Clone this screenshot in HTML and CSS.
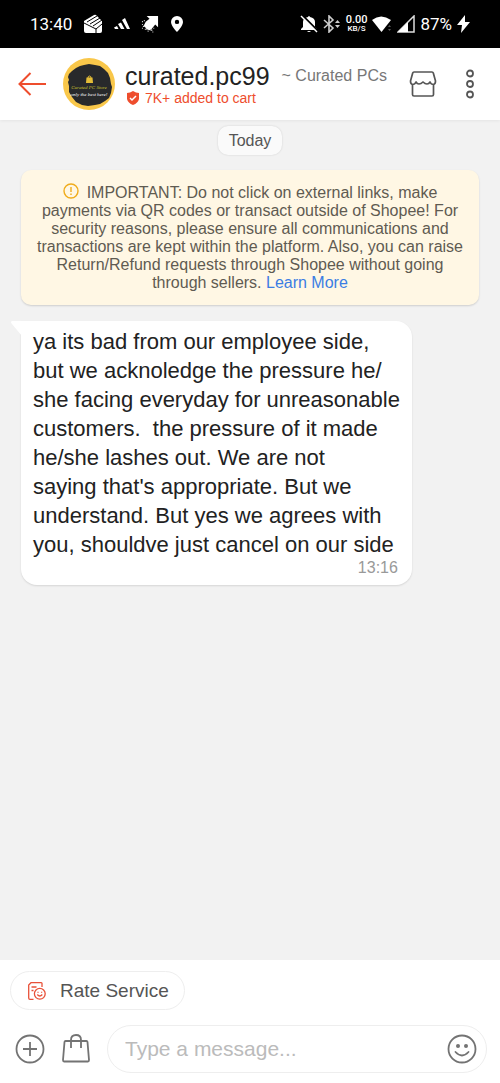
FILE: index.html
```html
<!DOCTYPE html>
<html lang="en">
<head>
<meta charset="utf-8">
<meta name="viewport" content="width=device-width, initial-scale=1">
<title>curated.pc99</title>
<link rel="stylesheet" href="styles.css">
</head>
<body>
<div class="status">
  <div class="status-left">
    <span class="clock">13:40</span>
    <svg width="20" height="20" viewBox="0 0 20 20"><path d="M1 7L11 1q1-.5 2 0l5 5 1 1v10q0 2-2 2H3q-2 0-2-2z" fill="#fff"/><path d="M1 9l12 6 6-5M13 15v4M4 8l10-6M7 10l10-6M10 12l9-6" stroke="#000" fill="none"/></svg>
    <svg width="16" height="12" viewBox="0 0 16 12"><path d="M0 9.500l3-1.500 1.500 3H1zM4 6l3-1.500 3.500 6.500H7zM8 2l3-2 5 11h-3z" fill="#fff"/></svg>
    <svg width="18" height="18" viewBox="0 0 19 19"><path d="M6 1h12v12l-3-3-4 5-2 1-3-1-3-4 2-4 4-3z" fill="#fff"/><path d="M1 7h1M3 6h1M1 10h1M2 12h2M1 14h1M4 15h2M7 17h1M10 16h2M13 14h1M12 18h1" stroke="#ddd" stroke-width="1.200"/></svg>
    <svg width="14" height="18" viewBox="0 0 14 18"><path fill-rule="evenodd" d="M7 1a6 6 0 0 0-6 6c0 4 6 10 6 10s6-6 6-10a6 6 0 0 0-6-6zm0 3.700a2.200 2.200 0 1 1 0 4.400 2.200 2.200 0 0 1 0-4.400z" fill="#fff"/></svg>
  </div>
  <div class="status-right">
    <svg width="18" height="18" viewBox="0 0 18 18"><path d="M3 7q0-4 5-5 1-2 2 0 5 1 5 5v5l2 2v1H1v-1l2-2zM7 16h4q-2 2-4 0z" fill="#fff"/><path d="M3 1l14 14" stroke="#000" stroke-width="2"/><path d="M1 1l16 16" stroke="#fff" stroke-width="1.500"/></svg>
    <svg width="18" height="18" viewBox="0 0 18 18"><path d="M1 5l9 8-4 4V1l4 4-9 8" fill="none" stroke="#ccc" stroke-width="1.600"/><path d="M12 8l2.500-3L17 8zM12 10h5l-2.500 3z" fill="#ccc"/></svg>
    <span class="speed"><span>0.00</span><span>KB/S</span></span>
    <svg width="20" height="18" viewBox="0 0 20 18"><path d="M0 5q9-7 19 0L9.500 17z" fill="#fff"/><path d="M16 12l1.500-2 1.500 2zM16 14h3l-1.500 2z" fill="#555"/></svg>
    <svg width="18" height="18" viewBox="0 0 18 18"><path d="M17 1v16H1z" fill="none" stroke="#ddd" stroke-width="1.500"/><path d="M1 17L11 7v10z" fill="#fff"/></svg>
    <span class="battery">87%</span>
    <svg width="13" height="18" viewBox="0 0 13 18"><path d="M8 0L0 10h5l-1 8 9-11H8z" fill="#fff"/></svg>
  </div>
</div>

<header class="header">
  <button class="icon-button" aria-label="Back"><svg width="28" height="26" viewBox="0 0 28 26" fill="none" stroke="#ee4d2d" stroke-width="2"><path d="M12.500 2L1.500 13l11 11M1.500 13H28"/></svg></button>
  <svg class="avatar" width="52" height="52" viewBox="0 0 52 52">
    <circle cx="26" cy="26" r="26" fill="#f9c74a"/>
    <path d="M6 16l2-2 1-1 4-3 4-2 4-1 5-1 6 1 5 1 4 3 4 4 2 5 1 6 1 3-1 6-2 5-4 3-5 3-5 1-7 1-6-1-6-3-4-5-3-5v-6l-1-4 1-2-1-3z" fill="#28292b"/>
    <path d="M23.500 19.500h6l.5 5.500h-7z" fill="#e4bd37"/><path d="M25 20q0-2 1.500-2t1.500 2" fill="none" stroke="#e4bd37"/>
    <text x="26" y="31" class="avatar-name" text-anchor="middle">Curated PC Store</text>
    <text x="26" y="38" class="avatar-tag" text-anchor="middle">only the best here!</text>
  </svg>
  <div class="seller">
    <div class="seller-line"><h1>curated.pc99</h1><span class="alias">~ Curated PCs</span></div>
    <div class="cart-line"><svg width="14" height="14" viewBox="0 0 14 14"><path d="M7 0q3 2 6 2v6q-1 4-6 6-5-2-6-6V2q3 0 6-2z" fill="#ee4d2d"/><path d="M4 7l2 2 4-4" stroke="#fff" stroke-width="1.500" fill="none"/></svg><span>7K+ added to cart</span></div>
  </div>
  <div class="header-actions">
    <button class="icon-button" aria-label="Shop"><svg width="28" height="28" viewBox="0 0 28 28" fill="none" stroke="#555" stroke-width="1.700" stroke-linejoin="round"><path d="M5 2h18q1 0 1.300 1L26.500 11q0 3-2 3.500-2.500 0-3.500-2.500-1 2-3 2t-4-2q-2 2-4 2t-3-2q-1 2.500-3.500 2.500-2-.5-2-3.500L3.700 3q.3-1 1.300-1zM3.500 14.500v10q0 1.500 1.500 1.500h18q1.500 0 1.500-1.500v-10"/></svg></button>
    <button class="icon-button" aria-label="More options"><svg width="8" height="30" viewBox="0 0 8 30" fill="none" stroke="#555" stroke-width="1.800"><circle cx="4" cy="4.500" r="3"/><circle cx="4" cy="15" r="3"/><circle cx="4" cy="25.500" r="3"/></svg></button>
  </div>
</header>

<main class="chat">
  <div class="day">Today</div>
  <p class="notice"><svg width="16" height="16" viewBox="0 0 16 16" fill="none" stroke="#f0ac1c" stroke-width="1.400"><circle cx="8" cy="8" r="7"/><path d="M8 4v5M8 10.500V12"/></svg>IMPORTANT: Do not click on external links, make<br>payments via QR codes or transact outside of Shopee! For<br>security reasons, please ensure all communications and<br>transactions are kept within the platform. Also, you can raise<br>Return/Refund requests through Shopee without going<br>through sellers. <a href="#learn">Learn More</a></p>
  <article class="bubble">
    <svg class="tail" width="11" height="18" viewBox="0 0 11 18"><path d="M1 0h10v15L1 3q-2-2 0-3z" fill="#fff"/></svg>
    <p>ya its bad from our employee side,<br>but we acknoledge the pressure he/<br>she facing everyday for unreasonable<br>customers.&nbsp; the pressure of it made<br>he/she lashes out. We are not<br>saying that's appropriate. But we<br>understand. But yes we agrees with<br>you, shouldve just cancel on our side</p>
    <time>13:16</time>
  </article>
</main>

<footer class="composer">
  <button class="rate"><svg width="18" height="18" viewBox="0 0 18 18" fill="none" stroke="#e85139" stroke-width="1.300"><path d="M14 5V1.500q0-.8-.8-.8H3L.7 3v13q0 1.300 1.300 1.300h3.500M3.500 5h5M3.500 8.500h2"/><circle cx="11.800" cy="11.800" r="5.400"/><path d="M9.300 12.500q2.500 3 5 0M10 9.800v1M13.600 9.800v1"/></svg>Rate Service</button>
  <div class="composer-row">
    <button class="icon-button" aria-label="Add"><svg width="30" height="30" viewBox="0 0 30 30" fill="none" stroke="#737373" stroke-width="1.800"><circle cx="15" cy="15" r="13.500"/><path d="M8 15h14M15 8v14"/></svg></button>
    <button class="icon-button" aria-label="Products"><svg width="28" height="30" viewBox="0 0 28 30" fill="none" stroke="#737373" stroke-width="1.800" stroke-linejoin="round"><path d="M3.500 7h21q.8 0 1 1L27 26q0 1.500-1 1.500H2q-1 0-1-1.500L2.500 8q.2-1 1-1zM9 14V6q0-5 5-5t5 5v8"/></svg></button>
    <div class="field">
      <input type="text" aria-label="Message" placeholder="Type a message...">
      <button class="icon-button" aria-label="Emoji"><svg width="30" height="30" viewBox="0 0 30 30" fill="none" stroke="#737373" stroke-width="1.800"><circle cx="15" cy="15" r="13.500"/><path d="M8.500 18q6.500 7 13 0" stroke-linecap="round"/><g fill="#737373" stroke="none"><circle cx="11" cy="12" r="2"/><circle cx="19" cy="12" r="2"/></g></svg></button>
    </div>
  </div>
</footer>
</body>
</html>
```
FILE: styles.css
```css
* { box-sizing: border-box; }
body {
  margin: 0;
  min-height: 100vh;
  display: flex;
  flex-direction: column;
  background: #f2f2f2;
  color: #222;
  font-family: "Liberation Sans", Arial, sans-serif;
}
svg { display: block; flex: none; }
h1, p { margin: 0; font-weight: 400; }
button, input { font: inherit; color: inherit; background: none; border: 0; padding: 0; }
.icon-button { display: flex; flex: none; }

.status {
  display: flex;
  justify-content: space-between;
  align-items: center;
  height: 48px;
  padding: 0 30px;
  background: #000;
  color: #fff;
  font-family: Roboto, sans-serif;
  font-size: 17px;
}
.status-left { display: flex; align-items: center; gap: 11px; }
.status-right { display: flex; align-items: center; gap: 5px; }
.speed {
  display: flex;
  flex-direction: column;
  align-items: center;
  font-size: 11px;
  line-height: 10px;
  font-weight: 500;
}
.speed span + span { font-size: 8px; line-height: 8px; }

.header {
  display: flex;
  align-items: center;
  height: 72px;
  padding: 0 26px 0 18px;
  background: #fff;
  box-shadow: 0 1px 3px rgba(0, 0, 0, .06);
}
.avatar { margin: 0 10px 0 17px; }
.avatar-name { fill: #c9c22f; font: italic 5px "Liberation Serif", serif; }
.avatar-tag { fill: #fff; font: italic 5px "Liberation Serif", serif; }
.seller { flex: 1; white-space: nowrap; }
.seller-line { display: flex; align-items: center; gap: 12px; }
.seller h1 { font-size: 25px; line-height: 28px; }
.alias { font-size: 16px; color: #777; }
.cart-line {
  display: flex;
  align-items: center;
  gap: 5px;
  padding-left: 1px;
  font-size: 14px;
  line-height: 16px;
  color: #ee4d2d;
}
.header-actions { display: flex; align-items: center; gap: 29px; }

.chat { flex: 1; padding: 6px 21px 20px; }
.day {
  width: fit-content;
  margin: 0 auto 15px;
  padding: 0 11px;
  border-radius: 10px;
  background: #fafafa;
  box-shadow: 0 0 2px rgba(0, 0, 0, .15);
  font-size: 16px;
  line-height: 29px;
  color: #555;
}
.notice {
  padding: 13px 0;
  border-radius: 10px;
  background: #fff7e4;
  box-shadow: 0 1px 2px rgba(0, 0, 0, .15);
  font-size: 16px;
  line-height: 18px;
  text-align: center;
  white-space: nowrap;
  color: #5f5b52;
}
.notice svg { display: inline-block; margin-right: 8px; vertical-align: -1px; }
.notice a { color: #3b7de3; text-decoration: none; }
.bubble {
  position: relative;
  width: fit-content;
  margin-top: 16px;
  padding: 6px 12px 9px;
  border-radius: 0 16px 16px 16px;
  background: #fff;
  box-shadow: 0 1px 2px rgba(0, 0, 0, .12);
}
.bubble p { font-size: 22px; line-height: 29px; white-space: nowrap; }
.bubble time {
  display: block;
  padding-right: 2px;
  text-align: right;
  font-size: 16px;
  line-height: 17px;
  color: #999;
}
.tail { position: absolute; top: 0; left: -10px; }

.composer { padding: 11px 13px 10px 10px; background: #fff; }
.rate {
  display: flex;
  align-items: center;
  gap: 14px;
  height: 39px;
  padding: 0 15px 0 17px;
  border: 1px solid #eee;
  border-radius: 20px;
  font-size: 19px;
  color: #555;
}
.composer-row { display: flex; align-items: center; gap: 17px; margin-top: 15px; padding-left: 5px; }
.field {
  flex: 1;
  display: flex;
  align-items: center;
  height: 48px;
  padding: 0 9px 0 17px;
  border: 1px solid #eee;
  border-radius: 24px;
}
.field input { flex: 1; min-width: 0; outline: 0; font-size: 21px; }
.field input::placeholder { color: #bbb; opacity: 1; }
```
